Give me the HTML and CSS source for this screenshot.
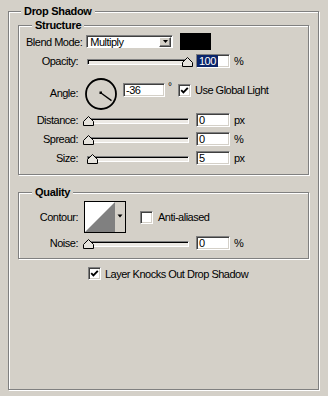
FILE: index.html
```html
<!DOCTYPE html>
<html>
<head>
<meta charset="utf-8">
<link rel="stylesheet" href="styles.css">
</head>
<body>
<fieldset class="group outer">
  <legend class="title">Drop Shadow</legend>

  <fieldset class="group inner structure">
    <legend class="title">Structure</legend>

    <div class="row blend-row">
      <span class="label-plain">Blend Mode:</span>
      <div class="select">
        <span class="select-text">Multiply</span>
        <span class="select-btn"><svg width="5" height="3" viewBox="0 0 5 3"><polygon points="0,0 5,0 2.5,3" fill="#000"/></svg></span>
      </div>
      <div class="swatch"></div>
    </div>

    <div class="row opacity-row">
      <span class="label">Opacity:</span>
      <div class="slider">
        <div class="track"></div>
        <svg class="thumb" style="left:95px" width="11" height="10" viewBox="0 0 11 10"><polygon points="5.5,0.5 10.5,5.5 10.5,9.5 0.5,9.5 0.5,5.5" fill="#e6e3dd" stroke="#000"/></svg>
      </div>
      <div class="field"><span class="sel">100</span></div>
      <span class="unit">%</span>
    </div>

    <div class="row angle-row">
      <span class="label angle-label">Angle:</span>
      <svg class="dial" width="32" height="32" viewBox="0 0 32 32">
        <circle cx="16" cy="16" r="15" fill="none" stroke="#000" stroke-width="1.8"/>
        <line x1="16" y1="15" x2="26.5" y2="22.6" stroke="#000" stroke-width="1.3"/>
        <rect x="14.5" y="13.5" width="2.5" height="2.5" fill="#000"/>
      </svg>
      <div class="angle-rest">
        <div class="field angle-field"><span class="val">-36</span></div>
        <span class="degree">°</span>
        <span class="check checked"><svg width="9" height="9" viewBox="0 0 9 9"><path d="M1.2 4.2 L3.4 6.4 L7.8 1.8" fill="none" stroke="#000" stroke-width="1.9"/></svg></span>
        <span class="check-text">Use Global Light</span>
      </div>
    </div>

    <div class="row slider-row distance-row">
      <span class="label">Distance:</span>
      <div class="slider">
        <div class="track"></div>
        <svg class="thumb" style="left:-4px" width="11" height="10" viewBox="0 0 11 10"><polygon points="5.5,0.5 10.5,5.5 10.5,9.5 0.5,9.5 0.5,5.5" fill="#e6e3dd" stroke="#000"/></svg>
      </div>
      <div class="field"><span class="val">0</span></div>
      <span class="unit">px</span>
    </div>

    <div class="row slider-row">
      <span class="label">Spread:</span>
      <div class="slider">
        <div class="track"></div>
        <svg class="thumb" style="left:-4px" width="11" height="10" viewBox="0 0 11 10"><polygon points="5.5,0.5 10.5,5.5 10.5,9.5 0.5,9.5 0.5,5.5" fill="#e6e3dd" stroke="#000"/></svg>
      </div>
      <div class="field"><span class="val">0</span></div>
      <span class="unit">%</span>
    </div>

    <div class="row slider-row">
      <span class="label">Size:</span>
      <div class="slider">
        <div class="track"></div>
        <svg class="thumb" style="left:0px" width="11" height="10" viewBox="0 0 11 10"><polygon points="5.5,0.5 10.5,5.5 10.5,9.5 0.5,9.5 0.5,5.5" fill="#e6e3dd" stroke="#000"/></svg>
      </div>
      <div class="field"><span class="val">5</span></div>
      <span class="unit">px</span>
    </div>
  </fieldset>

  <fieldset class="group inner quality">
    <legend class="title">Quality</legend>

    <div class="row contour-row">
      <span class="label">Contour:</span>
      <svg class="contour" width="42" height="32" viewBox="0 0 42 32">
        <rect x="0.5" y="0.5" width="41" height="31" fill="#d4d0c8" stroke="#000"/>
        <rect x="1" y="1" width="30" height="30" fill="#fff"/>
        <polygon points="1,31 31,1 31,31" fill="#808080"/>
        <polygon points="33.5,13.5 38.5,13.5 36,16.5" fill="#000"/>
      </svg>
      <span class="check aa-check"></span>
      <span class="check-text">Anti-aliased</span>
    </div>

    <div class="row slider-row noise-row">
      <span class="label">Noise:</span>
      <div class="slider">
        <div class="track"></div>
        <svg class="thumb" style="left:-4px" width="11" height="10" viewBox="0 0 11 10"><polygon points="5.5,0.5 10.5,5.5 10.5,9.5 0.5,9.5 0.5,5.5" fill="#e6e3dd" stroke="#000"/></svg>
      </div>
      <div class="field"><span class="val">0</span></div>
      <span class="unit">%</span>
    </div>
  </fieldset>

  <div class="row knock-row">
    <span class="check checked"><svg width="9" height="9" viewBox="0 0 9 9"><path d="M1.2 4.2 L3.4 6.4 L7.8 1.8" fill="none" stroke="#000" stroke-width="1.9"/></svg></span>
    <span class="check-text">Layer Knocks Out Drop Shadow</span>
  </div>
</fieldset>
</body>
</html>
```

FILE: styles.css
```css
* {
  box-sizing: border-box;
}

html,
body {
  margin: 0;
  height: 396px;
}

body {
  background: #d4d0c8;
  font-family: "Liberation Sans", Arial, sans-serif;
  font-size: 11px;
  letter-spacing: -0.5px;
  color: #000;
  display: flex;
  flex-direction: column;
  overflow: hidden;
}

.group {
  margin: 0;
  padding: 0;
  min-inline-size: 0;
  border: 1px solid #808080;
  box-shadow: 1px 1px 0 #fff, inset 1px 1px 0 #fff;
}

.title {
  font-weight: bold;
  letter-spacing: -0.3px;
  line-height: 13px;
  padding: 0 3px;
  background: #d4d0c8;
}

.outer {
  flex: 1;
  margin: 5px 9px 6px 8px;
  padding: 1px 9px 0 9px;
}

.outer > legend {
  margin-left: 3px;
}

.inner {
  padding: 1px 0 9px 0;
}

.inner > legend {
  margin-left: 13px;
}

.quality {
  margin-top: 11px;
  padding: 2px 0 8px 0;
}

.row {
  display: flex;
  align-items: center;
  height: 14px;
}

.label {
  width: 59px;
  flex: none;
  text-align: right;
}

/* Blend mode */
.blend-row {
  height: 17px;
}

.label-plain {
  margin-left: 7px;
}

.select {
  display: flex;
  align-items: center;
  width: 87px;
  height: 13px;
  margin-left: 4px;
  padding: 1px;
  background: #fff;
  border: 1px solid;
  border-color: #808080 #fff #fff #808080;
  box-shadow: inset 1px 1px 0 #404040;
}

.select-text {
  flex: 1;
  padding-left: 2px;
  padding-top: 1px;
  line-height: 11px;
}

.select-btn {
  width: 12px;
  height: 10px;
  display: flex;
  align-items: center;
  justify-content: center;
  background: #d4d0c8;
  border: 1px solid;
  border-color: #fff #404040 #404040 #fff;
  box-shadow: inset -1px -1px 0 #808080;
}

.swatch {
  width: 31px;
  height: 17px;
  margin-left: 7px;
  background: #000;
}

/* Sliders */
.opacity-row {
  margin-top: 4px;
}

.slider {
  position: relative;
  flex: none;
  width: 102px;
  height: 14px;
  margin-left: 9px;
}

.track {
  margin-top: 5px;
  height: 6px;
  background: #ece9e4;
  border: 1px solid;
  border-color: #808080 #fff #fff #808080;
  box-shadow: inset 1px 1px 0 #000;
}

.thumb {
  position: absolute;
  top: 3px;
  display: block;
}

.field {
  flex: none;
  display: flex;
  align-items: center;
  width: 34px;
  height: 14px;
  margin-left: 7px;
  background: #fff;
  border: 1px solid;
  border-color: #808080 #fff #fff #808080;
  box-shadow: inset 1px 1px 0 #404040, inset -1px -1px 0 #d4d0c8;
}

.val {
  padding-left: 2px;
  line-height: 12px;
}

.sel {
  height: 12px;
  line-height: 12px;
  padding: 0 2px 0 2px;
  background: #0a246a;
  color: #fff;
}

.unit {
  margin-left: 4px;
}

/* Angle */
.angle-row {
  height: 32px;
  margin-top: 10px;
  align-items: flex-start;
}

.angle-label {
  margin-top: 9px;
}

.dial {
  display: block;
  flex: none;
  margin-left: 7px;
}

.angle-rest {
  display: flex;
  align-items: center;
  height: 14px;
  margin-top: 5px;
}

.angle-field {
  width: 42px;
  margin-left: 6px;
}

.degree {
  align-self: flex-start;
  margin-left: 3px;
  margin-top: -2px;
  width: 10px;
  font-size: 10px;
}

.check {
  flex: none;
  display: flex;
  align-items: center;
  justify-content: center;
  width: 13px;
  height: 13px;
  background: #fff;
  border: 1px solid;
  border-color: #808080 #fff #fff #808080;
  box-shadow: inset 1px 1px 0 #404040, inset -1px -1px 0 #d4d0c8;
}

.check svg {
  display: block;
}

.check-text {
  margin-left: 4px;
  white-space: nowrap;
}

.distance-row {
  margin-top: 3px;
}

.slider-row + .slider-row {
  margin-top: 5px;
}

/* Quality */
.contour-row {
  height: 32px;
}

.contour {
  display: block;
  flex: none;
  margin-left: 6px;
}

.aa-check {
  margin-left: 14px;
}

.contour-row .check-text {
  margin-left: 5px;
}

.noise-row {
  margin-top: 3px;
}

.knock-row {
  height: 13px;
  margin-top: 8px;
  padding-left: 70px;
}
```
